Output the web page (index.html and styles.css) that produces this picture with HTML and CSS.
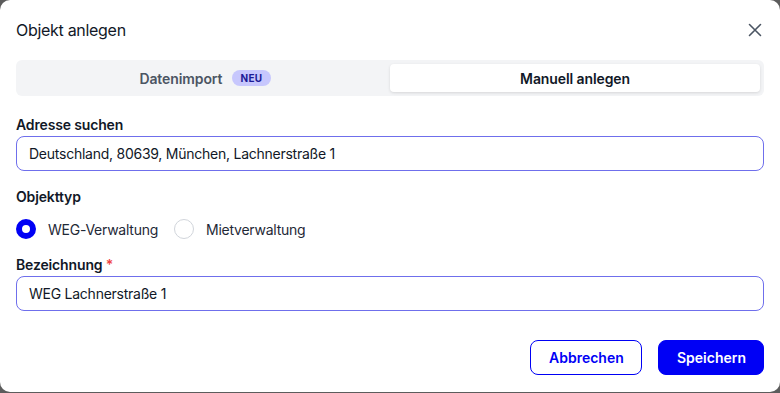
FILE: index.html
```html
<!DOCTYPE html>
<html lang="de">
<head>
    <meta charset="UTF-8">
    <meta name="viewport" content="width=device-width, initial-scale=1.0">
    <title>Objekt anlegen</title>
    <link rel="stylesheet" href="styles.css">
</head>
<body>
    <div class="modal">
        <div class="modal-header">
            <h2 class="modal-title">Objekt anlegen</h2>
            <button class="close-btn" aria-label="Schließen">
                <svg width="14" height="14" viewBox="0 0 14 14">
                    <path d="M1.5 1.5 L12.5 12.5 M12.5 1.5 L1.5 12.5" stroke="#4b5563" stroke-width="1.6" stroke-linecap="round"/>
                </svg>
            </button>
        </div>

        <div class="tabs">
            <div class="tab">Datenimport <span class="badge">NEU</span></div>
            <div class="tab active">Manuell anlegen</div>
        </div>

        <div class="field field-first">
            <label class="label">Adresse suchen</label>
            <div class="input">Deutschland, 80639, München, Lachnerstraße 1</div>
        </div>

        <div class="field">
            <label class="label">Objekttyp</label>
            <div class="radio-row">
                <span class="radio checked"></span>
                <span class="radio-label">WEG-Verwaltung</span>
                <span class="radio"></span>
                <span class="radio-label">Mietverwaltung</span>
            </div>
        </div>

        <div class="field">
            <label class="label">Bezeichnung <span class="req">*</span></label>
            <div class="input">WEG Lachnerstraße 1</div>
        </div>

        <div class="actions">
            <button class="btn btn-outline">Abbrechen</button>
            <button class="btn btn-primary">Speichern</button>
        </div>
    </div>
</body>
</html>
```

FILE: styles.css
```css
body {
    margin: 0;
    background-color: #5c5c5c;
    font-family: Inter, "Liberation Sans", sans-serif;
    color: #111827;
}

.modal {
    box-sizing: border-box;
    width: 780px;
    height: 392px;
    background: #fff;
    border-radius: 10px;
    padding: 18px 16px 0;
}

.modal-header {
    display: flex;
    justify-content: space-between;
    align-items: center;
    height: 24px;
}

.modal-title {
    margin: 0;
    font-size: 16px;
    font-weight: 400;
    line-height: 24px;
    letter-spacing: -0.3px;
}

.close-btn {
    border: none;
    background: none;
    padding: 0;
    margin-right: 2px;
    display: flex;
}

.tabs {
    display: flex;
    margin-top: 18px;
    height: 36px;
    box-sizing: border-box;
    padding: 4px;
    background: #f3f4f6;
    border-radius: 6px;
}

.tab {
    flex: 1;
    display: flex;
    align-items: center;
    justify-content: center;
    gap: 10px;
    font-size: 14px;
    font-weight: 600;
    color: #4b5563;
    border-radius: 4px;
    letter-spacing: -0.1px;
}

.tab.active {
    background: #fff;
    color: #111827;
    box-shadow: 0 1px 3px rgba(0, 0, 0, 0.12);
}

.badge {
    background: #c7c7fd;
    color: #1c1a96;
    font-size: 10px;
    font-weight: 700;
    letter-spacing: 0.4px;
    padding: 2px 8px;
    border-radius: 9px;
    line-height: 12px;
}

.field {
    margin-top: 16px;
}

.field-first {
    margin-top: 19px;
}

.label {
    display: block;
    font-size: 14px;
    font-weight: 600;
    line-height: 20px;
    margin-bottom: 1px;
    letter-spacing: -0.15px;
}

.req {
    color: #ef4444;
}

.input {
    box-sizing: border-box;
    height: 35px;
    border: 1px solid #6f6fec;
    border-radius: 8px;
    padding: 0 12px;
    display: flex;
    align-items: center;
    font-size: 14px;
    color: #111827;
    letter-spacing: -0.25px;
}

.radio-row {
    display: flex;
    align-items: center;
    margin-top: 12px;
    margin-bottom: 15px;
    font-size: 14px;
    letter-spacing: -0.25px;
}

.radio {
    box-sizing: border-box;
    width: 20px;
    height: 20px;
    border-radius: 50%;
    border: 1px solid #d1d5db;
    background: #fff;
}

.radio.checked {
    border: 6px solid #0000f5;
}

.radio-label {
    margin-left: 12px;
    margin-right: 16px;
    color: #1f2937;
}

.actions {
    display: flex;
    justify-content: flex-end;
    gap: 16px;
    margin-top: 29px;
}

.btn {
    box-sizing: border-box;
    height: 35px;
    border-radius: 8px;
    font-family: inherit;
    font-size: 14px;
    font-weight: 600;
    padding: 0 18px;
}

.btn-outline {
    width: 112px;
    background: #fff;
    border: 1px solid #0000f5;
    color: #0000f5;
}

.btn-primary {
    width: 106px;
    background: #0000f5;
    border: 1px solid #0000f5;
    color: #fff;
}
```
